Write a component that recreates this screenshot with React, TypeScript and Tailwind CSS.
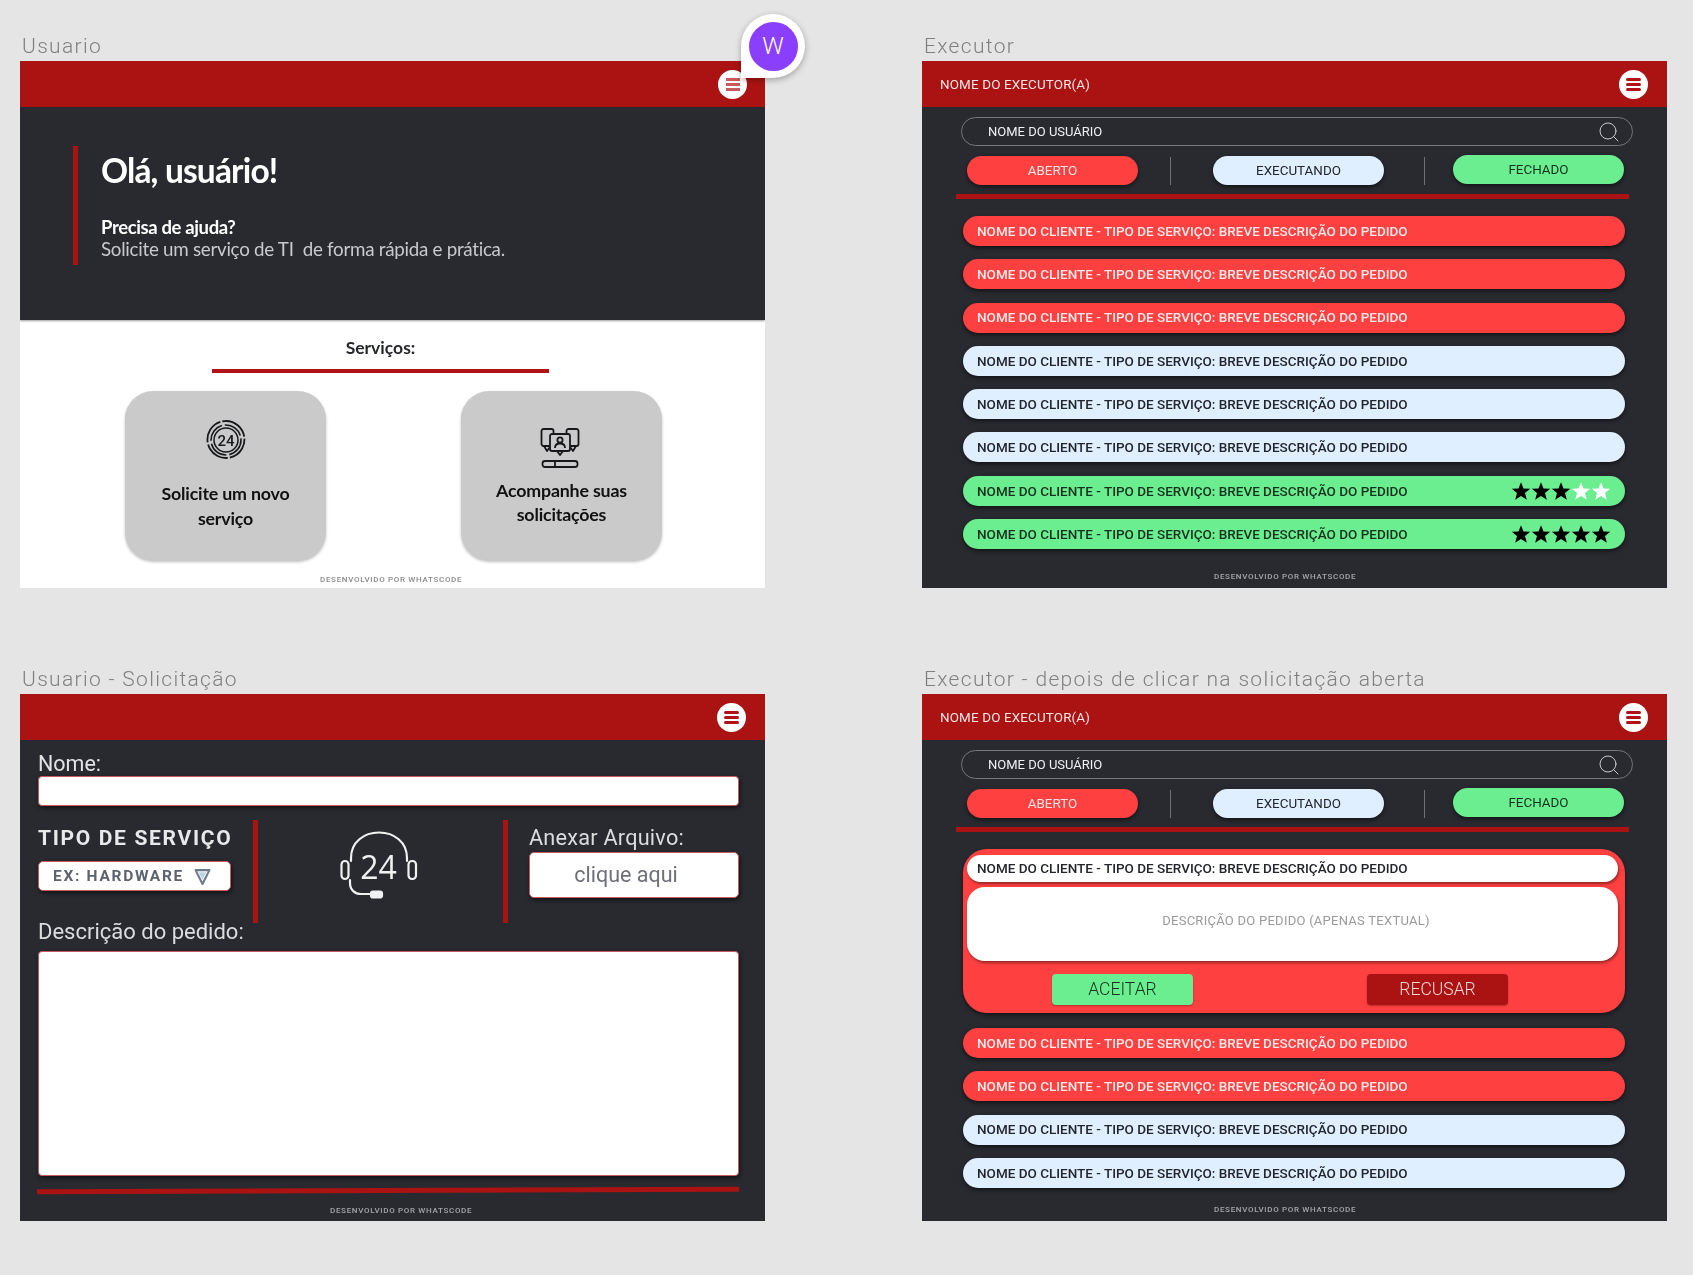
import React from "react";
import { Search } from "lucide-react";

const ROBOTO = "font-['Roboto',sans-serif]";
const LATO = "font-['Lato',sans-serif]";

function Label({ children }: { children: React.ReactNode }) {
  return (
    <div className={`${ROBOTO} h-[27px] pl-[2px] text-[21px] leading-[25px] font-light tracking-[0.063em] whitespace-nowrap text-[#808080]`}>
      {children}
    </div>
  );
}

function MenuButton({ faded }: { faded?: boolean }) {
  const bar = faded ? "h-[3px] w-[14px] bg-[#c9595c]" : "h-[3px] w-[15px] rounded-full bg-[#b01217]";
  return (
    <div className="flex h-[29px] w-[29px] flex-col items-center justify-center gap-[2px] rounded-full bg-white">
      <span className={bar} />
      <span className={bar} />
      <span className={bar} />
    </div>
  );
}

function Header({ name }: { name?: string }) {
  return (
    <div className="flex h-[46px] shrink-0 items-center justify-between bg-[#ab1313] pl-[18px] pr-[19px]">
      <span className={`${ROBOTO} pt-[3px] text-[13.400px] font-normal tracking-[0.012em] text-[#f4e6e6]`}>{name}</span>
      <MenuButton />
    </div>
  );
}

function Footer({ tone, className }: { tone: string; className: string }) {
  return (
    <div className={`${ROBOTO} ${tone} ${className} text-[8px] leading-[10px] font-medium tracking-[0.085em] whitespace-nowrap`}>
      DESENVOLVIDO POR WHATSCODE
    </div>
  );
}

function Star({ on }: { on: boolean }) {
  return (
    <svg viewBox="0 0 24 24" className="h-[20px] w-[20px]">
      <polygon
        points="12,1.5 15,9 23,9.4 16.8,14.5 19,22.5 12,18 5,22.5 7.2,14.5 1,9.4 9,9"
        fill={on ? "#000000" : "#ffffff"}
      />
    </svg>
  );
}

function Row({ kind, stars }: { kind: "red" | "blue" | "green"; stars?: number }) {
  const tone =
    kind === "red"
      ? "bg-[#ff4040] text-[#ffe9e9]"
      : kind === "blue"
        ? "bg-[#dfefff] text-[#23252c]"
        : "bg-[#6aee8f] text-[#17301f]";
  return (
    <div className={`${tone} flex h-[30px] w-[662px] items-center justify-between rounded-full pl-[14px] pr-[14px] shadow-[0_2px_4px_rgba(0,0,0,0.55)]`}>
      <span className={`${ROBOTO} text-[13.500px] font-medium whitespace-nowrap`}>
        NOME DO CLIENTE - TIPO DE SERVIÇO: BREVE DESCRIÇÃO DO PEDIDO
      </span>
      {stars !== undefined && (
        <span className="flex">
          {[0, 1, 2, 3, 4].map((i) => (
            <Star key={i} on={i < stars} />
          ))}
        </span>
      )}
    </div>
  );
}

function ExecutorTop() {
  const pill = `${ROBOTO} flex h-[29px] w-[171px] items-center justify-center rounded-full pt-px text-[13.400px] shadow-[0_2px_4px_rgba(0,0,0,0.55)]`;
  return (
    <>
      <div className="ml-[39px] mt-[10px] flex h-[29px] w-[672px] items-center justify-between rounded-full border border-[#75767b] pl-[26px] pr-[11px]">
        <span className={`${ROBOTO} text-[13px] text-[#eef0f3]`}>NOME DO USUÁRIO</span>
        <Search className="h-[24px] w-[24px] text-[#c9cace]" strokeWidth={1} />
      </div>
      <div className="ml-[45px] mt-[10px] flex items-center">
        <div className={`${pill} bg-[#ff4040] text-[#ffe4e4]`}>ABERTO</div>
        <span className="ml-[32px] h-[28px] w-px bg-[#707176]" />
        <div className={`${pill} ml-[42px] bg-[#dfefff] text-[#23252c]`}>EXECUTANDO</div>
        <span className="ml-[40px] h-[28px] w-px bg-[#707176]" />
        <div className={`${pill} ml-[28px] -translate-y-px bg-[#6aee8f] text-[#17301f]`}>FECHADO</div>
      </div>
      <div className="ml-[34px] mt-[9px] h-[5px] w-[673px] bg-[#ab1313]" />
    </>
  );
}

function ClockIcon() {
  return (
    <svg viewBox="0 0 40 42" className="h-[42px] w-[40px]" fill="none" stroke="#17181b">
      <path d="M20 2a18.500 18.500 0 1 1-.1 0" strokeWidth="1.800" strokeDasharray="26 2" />
      <circle cx="20" cy="21" r="15" strokeWidth="1.600" strokeDasharray="20 3" />
      <circle cx="20" cy="21" r="12" strokeWidth="1.500" />
      <text x="20" y="26.500" textAnchor="middle" fontSize="15" fontFamily="Roboto, sans-serif" fill="#17181b" stroke="none" fontWeight="500">
        24
      </text>
    </svg>
  );
}

function ChatIcon() {
  return (
    <svg viewBox="0 0 40 42" className="h-[42px] w-[40px]" fill="none" stroke="#17181b" strokeWidth="1.800" strokeLinejoin="round">
      <path d="M9 19H3.500a2 2 0 0 1-2-2V4a2 2 0 0 1 2-2h8a2 2 0 0 1 2 2v3" />
      <path d="M31 19h5.500a2 2 0 0 0 2-2V4a2 2 0 0 0-2-2h-8a2 2 0 0 0-2 2v3" />
      <path d="M4 19l3 5 3-4" />
      <path d="M36 19l-3 5-3-4" />
      <rect x="10" y="7" width="20" height="17" rx="2" />
      <path d="M17 24l3 4 3-4" />
      <circle cx="20" cy="13" r="2.600" />
      <path d="M15 21c0-3 2-4.500 5-4.500s5 1.500 5 4.500" />
      <rect x="2.500" y="34" width="35" height="6" rx="2.500" />
      <path d="M15 34v6" />
    </svg>
  );
}

function ServiceCard({ icon, lines, className, lineClass }: { icon: React.ReactNode; lines: string[]; className: string; lineClass: string }) {
  return (
    <div className={`${className} flex h-[169px] w-[201px] flex-col items-center rounded-[28px] bg-[#cacaca] shadow-[0_2px_3px_rgba(0,0,0,0.25)]`}>
      {icon}
      {lines.map((l) => (
        <div key={l} className={`${LATO} ${lineClass} text-[17.800px] font-bold tracking-[-0.01em] text-[#111]`}>
          {l}
        </div>
      ))}
    </div>
  );
}

function UsuarioPanel() {
  return (
    <div className="flex h-[527px] w-[745px] flex-col overflow-hidden bg-white">
      <div className="flex h-[46px] shrink-0 items-center justify-end bg-[#ab1313] pr-[18px]">
        <MenuButton faded />
      </div>
      <div className="h-[213px] shrink-0 bg-[#292a30] pl-[53px] pt-[39px] shadow-[0_1px_2px_rgba(0,0,0,0.4)]">
        <div className="flex h-[119px] border-l-[5px] border-[#ab1313] pl-[23px]">
          <div className={LATO}>
            <div className="text-[33.500px] leading-[48px] font-bold tracking-[-0.025em] text-white">Olá, usuário!</div>
            <div className="mt-[23px] text-[18.500px] leading-[21px] font-bold tracking-[-0.02em] text-white">Precisa de ajuda?</div>
            <div className="text-[18.800px] leading-[21px] tracking-[-0.015em] whitespace-pre text-[#c9c9cc]">
              Solicite um serviço de TI  de forma rápida e prática.
            </div>
          </div>
        </div>
      </div>
      <div className={`${LATO} mt-[17px] ml-[192px] w-[337px] text-center text-[17.500px] leading-[22px] font-bold text-[#26272c]`}>Serviços:</div>
      <div className="ml-[192px] mt-[10px] h-[4px] w-[337px] bg-[#b01217]" />
      <div className="ml-[105px] mt-[18px] flex">
        <ServiceCard
          className=""
          lineClass="h-[24.500px] leading-[24.500px]"
          icon={
            <div className="mb-[20px] mt-[28px]">
              <ClockIcon />
            </div>
          }
          lines={["Solicite um novo", "serviço"]}
        />
        <ServiceCard
          className="ml-[135px]"
          lineClass="h-[24px] leading-[24px]"
          icon={
            <div className="mb-[9px] mr-[3px] mt-[36px]">
              <ChatIcon />
            </div>
          }
          lines={["Acompanhe suas", "solicitações"]}
        />
      </div>
      <Footer tone="text-[#8b8b8b]" className="ml-[300px] mt-[15px]" />
    </div>
  );
}

function ExecutorPanel() {
  return (
    <div className="flex h-[527px] w-[745px] flex-col overflow-hidden bg-[#292a30]">
      <Header name="NOME DO EXECUTOR(A)" />
      <ExecutorTop />
      <div className="ml-[41px] mt-[17px] flex flex-col gap-[13.300px]">
        <Row kind="red" />
        <Row kind="red" />
        <Row kind="red" />
        <Row kind="blue" />
        <Row kind="blue" />
        <Row kind="blue" />
        <Row kind="green" stars={3} />
        <Row kind="green" stars={5} />
      </div>
      <Footer tone="text-[#a5a6aa]" className="ml-[292px] mt-[23px]" />
    </div>
  );
}

function Field({ className }: { className: string }) {
  return <div className={`${className} rounded-[4px] border border-[#c85a5e] bg-white shadow-[1px_2px_4px_rgba(0,0,0,0.6)]`} />;
}

function HeadsetIcon() {
  return (
    <svg viewBox="0 0 78 70" className="h-[70px] w-[78px]" fill="none" stroke="#f1f1f1" strokeWidth="2.200" strokeLinecap="round">
      <path d="M11 30V27C11 11 24 1.500 39 1.500S67 11 67 27v3" />
      <rect x="1.500" y="30" width="7" height="18" rx="3.500" />
      <rect x="68.500" y="30" width="7.500" height="18" rx="3.500" />
      <path d="M10 49v3c0 7 5 11 11 11h10" />
      <rect x="31" y="60.500" width="11" height="6" rx="2" fill="#f1f1f1" />
      <text x="38.500" y="48" textAnchor="middle" fontSize="32" fontFamily="'Open Sans', sans-serif" fill="#f1f1f1" stroke="none">
        24
      </text>
    </svg>
  );
}

function SolicitacaoPanel() {
  return (
    <div className={`${ROBOTO} flex h-[527px] w-[745px] flex-col overflow-hidden bg-[#292a30]`}>
      <Header />
      <div className="ml-[18px] mt-[12px] text-[21.500px] leading-[24px] text-[#e2e2e4]">Nome:</div>
      <Field className="ml-[18px] h-[30px] w-[701px]" />
      <div className="ml-[18px] mt-[14px] flex h-[103px]">
        <div className="w-[193px]">
          <div className="mt-[6px] text-[21px] leading-[24px] font-bold tracking-[0.08em] whitespace-nowrap text-[#e9e9eb]">TIPO DE SERVIÇO</div>
          <div className="mt-[11px] flex h-[30px] items-center rounded-[5px] border border-[#c85a5e] bg-white pl-[14px] pt-[2px] shadow-[1px_2px_4px_rgba(0,0,0,0.6)]">
            <span className="text-[15.500px] font-bold tracking-[0.11em] whitespace-nowrap text-[#5d6270]">EX: HARDWARE</span>
            <svg viewBox="0 0 16 16" className="ml-[10px] -mt-[2px] h-[19px] w-[17px] shrink-0" fill="none">
              <path d="M1.500 2h13L8 15z" stroke="#6f7a8d" strokeWidth="2" strokeLinejoin="round" />
              <path d="M4.500 4h7L8 11z" fill="#b9d3e5" />
            </svg>
          </div>
        </div>
        <div className="ml-[22px] h-[103px] w-[5px] bg-[#ab1313]" />
        <div className="ml-[82px] mt-[11px]">
          <HeadsetIcon />
        </div>
        <div className="ml-[85px] h-[103px] w-[5px] bg-[#ab1313]" />
        <div className="ml-[21px] w-[210px]">
          <div className="mt-[6px] text-[21.700px] leading-[24px] tracking-[0.01em] whitespace-nowrap text-[#dcdcdf]">Anexar Arquivo:</div>
          <div className="mt-[2px] flex h-[46px] items-center justify-center rounded-[5px] border border-[#c85a5e] bg-white pr-[16px] text-[21.500px] text-[#6e7079] shadow-[1px_2px_4px_rgba(0,0,0,0.6)]">
            clique aqui
          </div>
        </div>
      </div>
      <div className="ml-[18px] -mt-[3px] text-[22px] leading-[24px] text-[#dcdcdf]">Descrição do pedido:</div>
      <Field className="ml-[18px] mt-[7px] h-[225px] w-[701px]" />
      <div className="ml-[17px] mt-[12px] h-[5px] w-[702px] -rotate-[0.2deg] bg-[#ab1313]" />
      <Footer tone="text-[#a5a6aa]" className="ml-[310px] mt-[13px]" />
    </div>
  );
}

function AbertaPanel() {
  return (
    <div className="flex h-[527px] w-[745px] flex-col overflow-hidden bg-[#292a30]">
      <Header name="NOME DO EXECUTOR(A)" />
      <ExecutorTop />
      <div className="ml-[41px] mt-[17px] h-[164px] w-[662px] rounded-[24px] bg-[#ff4040] pl-[4px] pt-[6px] shadow-[0_2px_4px_rgba(0,0,0,0.55)]">
        <div className={`${ROBOTO} flex h-[27px] w-[651px] items-center rounded-full bg-white pl-[10px] text-[13.500px] font-medium text-[#23252c] shadow-[1px_2px_3px_rgba(0,0,0,0.4)]`}>
          NOME DO CLIENTE - TIPO DE SERVIÇO: BREVE DESCRIÇÃO DO PEDIDO
        </div>
        <div className={`${ROBOTO} mt-[5px] flex h-[74px] w-[651px] items-center justify-center rounded-[18px] bg-white pb-[6px] pl-[7px] text-[13px] tracking-[0.02em] text-[#9a9a9c] shadow-[1px_2px_3px_rgba(0,0,0,0.4)]`}>
          DESCRIÇÃO DO PEDIDO (APENAS TEXTUAL)
        </div>
        <div className="ml-[85px] mt-[13px] flex">
          <div className={`${ROBOTO} flex h-[31px] w-[141px] items-center justify-center rounded-[4px] bg-[#6aee8f] text-[17.500px] font-light text-[#17301f] shadow-[0_1px_2px_rgba(0,0,0,0.3)]`}>ACEITAR</div>
          <div className={`${ROBOTO} ml-[174px] flex h-[31px] w-[141px] items-center justify-center rounded-[4px] bg-[#ab1313] text-[17.500px] font-light text-[#f5d7d7] shadow-[0_1px_2px_rgba(0,0,0,0.3)]`}>RECUSAR</div>
        </div>
      </div>
      <div className="ml-[41px] mt-[15px] flex flex-col gap-[13.300px]">
        <Row kind="red" />
        <Row kind="red" />
        <Row kind="blue" />
        <Row kind="blue" />
      </div>
      <Footer tone="text-[#a5a6aa]" className="ml-[292px] mt-[17px]" />
    </div>
  );
}

export default function App() {
  return (
    <div className="relative min-h-[1275px] overflow-hidden bg-[#e5e5e5] pl-[20px] pt-[34px]">
      <div className="grid w-[1648px] grid-cols-[745px_745px] gap-x-[157px] gap-y-[79px] blur-[0.7px]">
        <div>
          <Label>Usuario</Label>
          <UsuarioPanel />
        </div>
        <div>
          <Label>Executor</Label>
          <ExecutorPanel />
        </div>
        <div>
          <Label>Usuario - Solicitação</Label>
          <SolicitacaoPanel />
        </div>
        <div>
          <Label>Executor - depois de clicar na solicitação aberta</Label>
          <AbertaPanel />
        </div>
      </div>
      <div className="absolute left-[741px] top-[14px] flex h-[64px] w-[64px] items-center justify-center rounded-full rounded-bl-none bg-white shadow-[0_2px_6px_rgba(0,0,0,0.3)]">
        <div className={`${ROBOTO} flex h-[49px] w-[49px] items-center justify-center rounded-full bg-[#8a3ffc] text-[24px] font-light text-white`}>W</div>
      </div>
    </div>
  );
}
